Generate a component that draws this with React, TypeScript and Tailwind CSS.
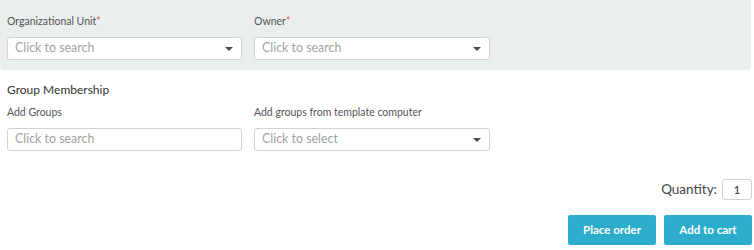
import React from 'react';

const font = { fontFamily: 'Lato, "Open Sans", sans-serif' };

function Caret() {
  return (
    <svg width="8" height="4" viewBox="0 0 8 4" className="shrink-0">
      <path d="M0 0h8L4 4z" fill="#4a4a4a" />
    </svg>
  );
}

function Field({ placeholder, caret }: { placeholder: string; caret?: boolean }) {
  return (
    <div className="flex h-[23px] items-center justify-between rounded-[3px] border border-[#cfd3d3] bg-white pl-[7px] pr-[8px]">
      <span className="text-[12.4px] text-[#a3a3a3]">{placeholder}</span>
      {caret && <Caret />}
    </div>
  );
}

function Label({ text, required }: { text: string; required?: boolean }) {
  return (
    <div className="mb-[9px] text-[10.5px] leading-[14px] text-[#555]">
      {text}
      {required && <span className="text-[#e05a5a]">*</span>}
    </div>
  );
}

export default function App() {
  return (
    <div className="w-[754px] h-[250px] bg-white" style={font}>
      {/* Panel */}
      <div className="w-[751px] rounded-b-[4px] bg-[#e9efee] px-[7px] pt-[14px] pb-[10px]">
        <div className="grid grid-cols-[235px_236px] gap-x-[12px]">
          <div>
            <Label text="Organizational Unit" required />
            <Field placeholder="Click to search" caret />
          </div>
          <div>
            <Label text="Owner" required />
            <Field placeholder="Click to search" caret />
          </div>
        </div>
      </div>

      {/* Group membership */}
      <div className="px-[7px] pt-[12px]">
        <div className="text-[12px] leading-[16px] text-[#333]">Group Membership</div>
        <div className="mt-[7px] grid grid-cols-[235px_236px] gap-x-[12px]">
          <div>
            <Label text="Add Groups" />
            <Field placeholder="Click to search" />
          </div>
          <div>
            <Label text="Add groups from template computer" />
            <Field placeholder="Click to select" caret />
          </div>
        </div>
      </div>

      {/* Quantity + actions */}
      <div className="mt-[28px] flex flex-col items-end pr-[2px]">
        <div className="flex items-center gap-[5px]">
          <span className="text-[13.5px] text-[#444]">Quantity:</span>
          <div className="flex h-[21px] w-[30px] items-center justify-center rounded-[3px] border border-[#cfd3d3] text-[12px] text-[#333]">
            1
          </div>
        </div>
        <div className="mt-[15px] flex gap-[8px]">
          <button className="h-[30px] w-[88px] rounded-[2px] bg-[#2badcb] text-[11.5px] font-bold text-white">
            Place order
          </button>
          <button className="h-[30px] w-[88px] rounded-[2px] bg-[#2badcb] text-[11.5px] font-bold text-white">
            Add to cart
          </button>
        </div>
      </div>
    </div>
  );
}
